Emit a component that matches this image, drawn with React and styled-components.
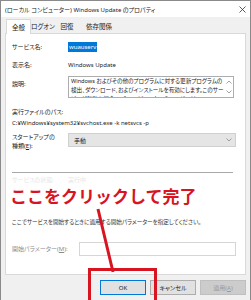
import React from 'react';
import styled, { createGlobalStyle } from 'styled-components';

const GlobalStyle = createGlobalStyle`
  html, body {
    margin: 0;
    padding: 0;
    background: #fff;
    overflow: hidden;
  }
  body {
    font-family: "Noto Sans", "Noto Sans CJK JP", sans-serif;
    font-feature-settings: "palt";
    color: #222;
  }
`;

const Chevron = ({ up }) => (
  <svg width="6" height="4" viewBox="0 0 6 4">
    <path d={up ? 'M0.5 3.5 L3 1 L5.5 3.5' : 'M0.5 0.5 L3 3 L5.5 0.5'} fill="none" stroke="#8a8a8a" strokeWidth="0.8" />
  </svg>
);

const App = () => {
  return (
    <Stage>
      <GlobalStyle />
      <Window>
        <TitleBar>
          <span>(ローカル コンピューター) Windows Update のプロパティ</span>
          <svg width="7" height="7" viewBox="0 0 7 7">
            <path d="M0.5 0.5 L6.5 6.5 M6.5 0.5 L0.5 6.5" stroke="#333" strokeWidth="0.8" />
          </svg>
        </TitleBar>

        <TabStrip>
          <Tab active w={25}>全般</Tab>
          <Tab w={24}>ログオン</Tab>
          <Tab w={24}>回復</Tab>
          <Tab w={40}>依存関係</Tab>
        </TabStrip>

        <Panel>
          <Row h={10}>
            <Label>サービス名:</Label>
            <Selected>wuauserv</Selected>
          </Row>
          <Row h={10} mt={8}>
            <Label>表示名:</Label>
            <Value>Windows Update</Value>
          </Row>
          <Row h={22} mt={6} top>
            <Label pt={3}>説明:</Label>
            <DescBox>
              <DescText>
                <div>Windows およびその他のプログラムに対する更新プログラムの</div>
                <div>検出、ダウンロード、およびインストールを有効にします。このサー</div>
                <div>ビスが無効な場合、このコンピューターのユーザーは Windows</div>
              </DescText>
              <ScrollCol>
                <Chevron up />
                <Chevron />
              </ScrollCol>
            </DescBox>
          </Row>
          <Row h={10} mt={9}>
            <Label wide>実行ファイルのパス:</Label>
          </Row>
          <Row h={10} mt={1}>
            <Value>C:¥Windows¥system32¥svchost.exe -k netsvcs -p</Value>
          </Row>
          <Row h={19} mt={5} top>
            <Label lh={9}>
              スタートアップの<br />種類(<u>E</u>):
            </Label>
            <SelectBox>
              <span>手動</span>
              <Chevron />
            </SelectBox>
          </Row>
          <Separator />
          <Row h={9} mt={3}>
            <Label faint lh={9}>サービスの状態:</Label>
            <Value faint>実行中</Value>
          </Row>
          <Row h={10} mt={32}>
            <Hint>ここでサービスを開始するときに適用する開始パラメーターを指定してください。</Hint>
          </Row>
          <Row h={14} mt={15}>
            <Label dim w={67}>
              開始パラメーター(<u>M</u>):
            </Label>
            <InputBox />
          </Row>
        </Panel>

        <ButtonBar>
          <Button kind="focus">OK</Button>
          <Button>キャンセル</Button>
          <Button kind="disabled">
            適用(<u>A</u>)
          </Button>
        </ButtonBar>
      </Window>

      <Callout>ここをクリックして完了</Callout>
      <Arrow width="251" height="300" viewBox="0 0 251 300">
        <line x1="98" y1="209" x2="113" y2="272" stroke="#d7141f" strokeWidth="3" />
      </Arrow>
      <Highlight />
    </Stage>
  );
};

export default App;

const Stage = styled.div`
  position: relative;
  width: 251px;
  height: 300px;
  overflow: hidden;
`;

const Window = styled.div`
  box-sizing: border-box;
  width: 251px;
  height: 300px;
  border: 1px solid #8a8a8a;
  border-bottom: none;
  background: #f0f0f0;
  display: flex;
  flex-direction: column;
`;

const TitleBar = styled.div`
  height: 16px;
  flex-shrink: 0;
  background: #fff;
  display: flex;
  align-items: center;
  justify-content: space-between;
  padding: 1px 4px 0 4px;
  box-sizing: border-box;
  font-size: 6px;
  white-space: nowrap;
`;

const TabStrip = styled.div`
  height: 16px;
  flex-shrink: 0;
  display: flex;
  align-items: flex-end;
  padding-left: 5px;
`;

const Tab = styled.div`
  box-sizing: border-box;
  width: ${p => p.w}px;
  height: ${p => (p.active ? 15 : 14)}px;
  display: flex;
  align-items: center;
  justify-content: center;
  font-size: 6.5px;
  white-space: nowrap;
  position: relative;
  z-index: ${p => (p.active ? 1 : 0)};
  margin-bottom: ${p => (p.active ? -1 : 0)}px;
  background: ${p => (p.active ? '#fff' : 'transparent')};
  border: ${p => (p.active ? '1px solid #d9d9d9' : 'none')};
  border-bottom: none;
`;

const Panel = styled.div`
  box-sizing: border-box;
  margin: 0 4px;
  height: 242px;
  flex-shrink: 0;
  background: #fff;
  border: 1px solid #d9d9d9;
  padding: 8px 9px 0 6px;
  display: flex;
  flex-direction: column;
`;

const Row = styled.div`
  display: flex;
  align-items: ${p => (p.top ? 'flex-start' : 'center')};
  height: ${p => p.h}px;
  margin-top: ${p => p.mt || 0}px;
  flex-shrink: 0;
`;

const Label = styled.div`
  width: ${p => (p.wide ? 'auto' : `${p.w || 56}px`)};
  flex-shrink: 0;
  font-size: 6px;
  line-height: ${p => p.lh || 10}px;
  padding-top: ${p => p.pt || 0}px;
  white-space: nowrap;
  color: ${p => (p.faint ? '#e6e6e6' : p.dim ? '#8c8c8c' : '#222')};
`;

const Value = styled.div`
  font-size: 6px;
  line-height: 9px;
  white-space: nowrap;
  color: ${p => (p.faint ? '#e6e6e6' : '#222')};
`;

const Selected = styled.span`
  font-size: 6px;
  line-height: 10px;
  background: #0078d7;
  color: #fff;
  padding: 0 1px;
`;

const DescBox = styled.div`
  box-sizing: border-box;
  flex: 1;
  height: 22px;
  margin-right: 2px;
  border: 1px solid #adadad;
  display: flex;
  overflow: hidden;
`;

const DescText = styled.div`
  flex: 1;
  padding: 0 0 0 2px;
  font-size: 5.6px;
  line-height: 9px;
  white-space: nowrap;
  overflow: hidden;
`;

const ScrollCol = styled.div`
  width: 9px;
  display: flex;
  flex-direction: column;
  align-items: center;
  justify-content: space-between;
  padding: 3px 0 3px;
`;

const SelectBox = styled.div`
  box-sizing: border-box;
  flex: 1;
  height: 14px;
  background: #e5e5e5;
  border: 1px solid #d0d0d0;
  display: flex;
  align-items: center;
  justify-content: space-between;
  padding: 0 3px 0 5px;
  font-size: 6px;
`;

const Separator = styled.div`
  height: 1px;
  background: #a8a8a8;
  margin: 20px 3px 0 0;
  flex-shrink: 0;
`;

const Hint = styled.div`
  font-size: 5.6px;
  white-space: nowrap;
  color: #333;
`;

const InputBox = styled.div`
  box-sizing: border-box;
  flex: 1;
  height: 14px;
  border: 1px solid #d6d6d6;
  background: #fff;
`;

const ButtonBar = styled.div`
  display: flex;
  justify-content: flex-end;
  gap: 4px;
  padding: 0 4px;
  margin-top: 5px;
`;

const Button = styled.div`
  box-sizing: border-box;
  width: 46px;
  height: 15px;
  display: flex;
  align-items: center;
  justify-content: center;
  font-size: 6px;
  background: ${p => (p.kind === 'disabled' ? '#cccccc' : '#e1e1e1')};
  border: 1px solid ${p => (p.kind === 'focus' ? '#0078d7' : p.kind === 'disabled' ? '#bfbfbf' : '#adadad')};
  color: ${p => (p.kind === 'disabled' ? '#9a9a9a' : '#222')};
`;

const Callout = styled.div`
  position: absolute;
  left: 10px;
  top: 187px;
  font-family: "Noto Sans CJK JP", sans-serif;
  font-feature-settings: normal;
  font-weight: 700;
  font-size: 17px;
  line-height: 17px;
  color: #d7141f;
  white-space: nowrap;
  text-shadow: 0 0 2px #fff;
`;

const Arrow = styled.svg`
  position: absolute;
  left: 0;
  top: 0;
  pointer-events: none;
`;

const Highlight = styled.div`
  position: absolute;
  left: 88px;
  top: 268px;
  width: 69px;
  height: 40px;
  box-sizing: border-box;
  border: 3px solid #d7141f;
`;
